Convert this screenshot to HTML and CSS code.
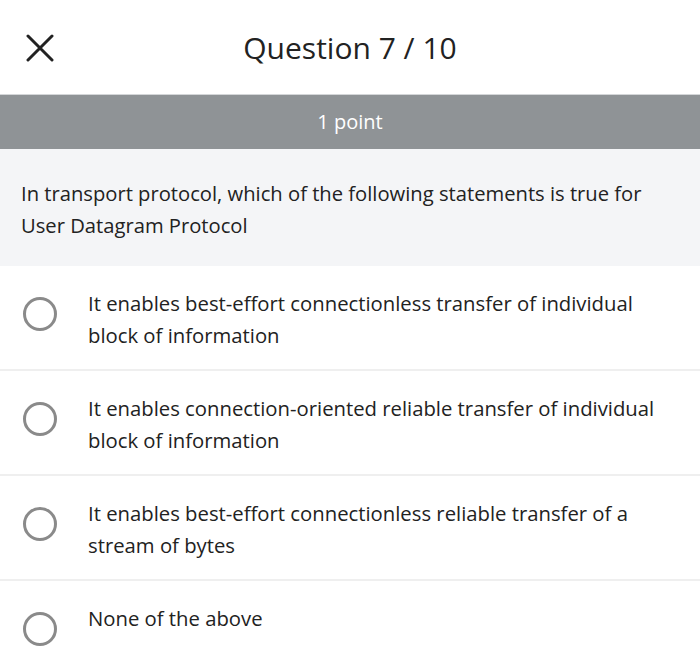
FILE: index.html
```html
<!DOCTYPE html>
<html>
<head>
  <meta charset="UTF-8">
  <meta name="viewport" content="width=device-width, initial-scale=1.0">
  <title>Quiz</title>
  <link rel="stylesheet" href="styles.css">
</head>
<body>
  <div class="header">
    <button class="close" aria-label="Close">
      <svg width="28" height="28" viewBox="0 0 28 28">
        <path d="M2 2 L26 26 M26 2 L2 26" stroke="#222" stroke-width="3" stroke-linecap="round"/>
      </svg>
    </button>
    <h1>Question 7 / 10</h1>
  </div>

  <div class="points">1 point</div>

  <div class="question">
    In transport protocol, which of the following statements is true for User Datagram Protocol
  </div>

  <ul class="options">
    <li class="option">
      <span class="radio"></span>
      <span class="label">It enables best-effort connectionless transfer of individual block of information</span>
    </li>
    <li class="option">
      <span class="radio"></span>
      <span class="label">It enables connection-oriented reliable transfer of individual block of information</span>
    </li>
    <li class="option">
      <span class="radio"></span>
      <span class="label">It enables best-effort connectionless reliable transfer of a stream of bytes</span>
    </li>
    <li class="option">
      <span class="radio"></span>
      <span class="label">None of the above</span>
    </li>
  </ul>
</body>
</html>
```

FILE: styles.css
```css
body {
  margin: 0;
  font-family: "Open Sans", Arial, sans-serif;
  color: #222;
  background-color: #fff;
}

.header {
  display: flex;
  align-items: center;
  height: 94px;
  position: relative;
}

.close {
  position: absolute;
  left: 26px;
  top: 34px;
  padding: 0;
  border: none;
  background: none;
}

.close svg {
  display: block;
}

.header h1 {
  flex: 1;
  margin: 0;
  text-align: center;
  font-size: 30px;
  font-weight: 400;
  color: #222;
}

.points {
  height: 54px;
  line-height: 54px;
  border-top: 1px solid #d4d6d8;
  background-color: #8f9396;
  color: #fff;
  text-align: center;
  font-size: 20px;
}

.question {
  padding: 28px 21px 25px;
  background-color: #f4f5f7;
  font-size: 20.2px;
  line-height: 32px;
  color: #222;
}

.options {
  list-style: none;
  margin: 0;
  padding: 0;
}

.option {
  display: flex;
  align-items: flex-start;
  gap: 31px;
  padding: 21px 21px 0 23px;
  height: 105px;
  box-sizing: border-box;
  border-bottom: 2px solid #efefef;
}

.option:last-child {
  border-bottom: none;
}

.radio {
  flex: none;
  width: 28px;
  height: 28px;
  margin-top: 10px;
  border: 3px solid #8a8a8a;
  border-radius: 50%;
}

.label {
  font-size: 20.3px;
  line-height: 32px;
  color: #222;
}
```
